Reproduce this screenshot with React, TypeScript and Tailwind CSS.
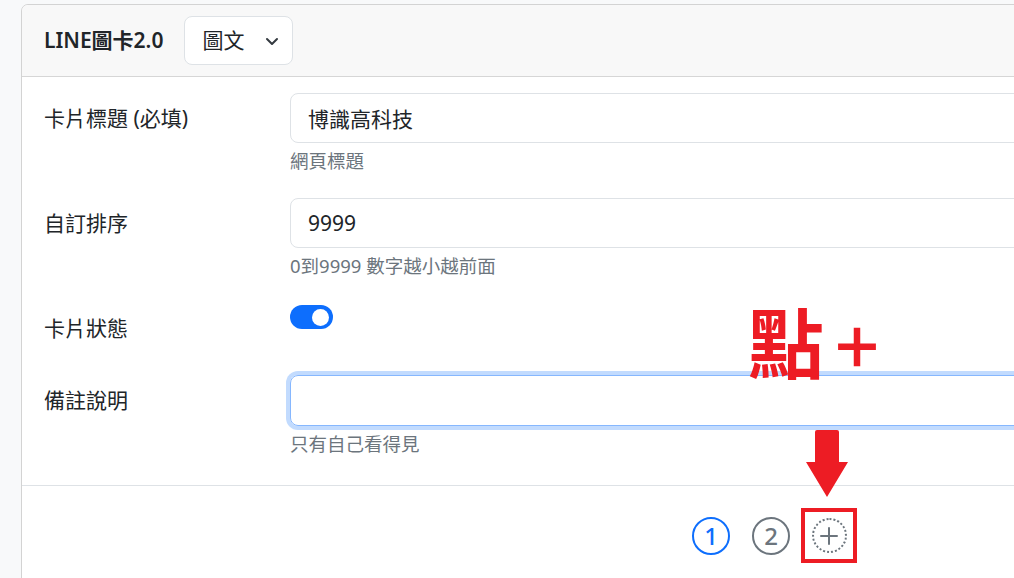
import React from 'react';

const font = "font-['Noto_Sans','Noto_Sans_CJK_TC',sans-serif]";

const Field: React.FC<{ label: string; children: React.ReactNode; tight?: boolean }> = ({ label, children, tight }) => (
  <div className="flex items-start mb-[24px]">
    <label className={`w-[246px] shrink-0 pt-[10px] ${tight ? 'pb-[8px]' : 'pb-[10px]'} text-[21px] leading-[30px] text-[#212529]`}>{label}</label>
    <div className="flex-1">{children}</div>
  </div>
);

const Help: React.FC<{ text: string }> = ({ text }) => (
  <p className="mt-[5px] text-[18.5px] leading-[26px] text-[#6c757d]">{text}</p>
);

export default function App() {
  return (
    <div className={`relative w-[1014px] h-[578px] overflow-hidden bg-[#f8f9fa] pl-[21px] pt-[4px] ${font}`}>
      <div className="w-[1100px] h-[700px] bg-white border border-[#d3d3d3] rounded-tl-[7px]">
        {/* header */}
        <div className="h-[72px] bg-[#f8f8f8] border-b border-[#d6d6d6] rounded-tl-[7px] flex items-center pl-[22px] gap-[21px]">
          <h2 className="text-[21px] font-semibold text-[#212529]">LINE圖卡2.0</h2>
          <button className="h-[49px] w-[109px] bg-white border border-[#dee2e6] rounded-[8px] flex items-center pl-[17px] gap-[20px] text-[21px] text-[#212529]">
            圖文
            <svg width="16" height="16" viewBox="0 0 16 16" fill="none" stroke="#343a40" strokeWidth="2" strokeLinecap="round" strokeLinejoin="round">
              <path d="M3 6l5 5 5-5" />
            </svg>
          </button>
        </div>

        {/* body */}
        <div className="pl-[22px] pt-[16px] pb-[4px] border-b border-[#dee2e6]">
          <Field label="卡片標題 (必填)">
            <input
              readOnly
              value="博識高科技"
              className="w-full h-[50px] border border-[#dee2e6] rounded-[8px] px-[17px] text-[21px] text-[#212529] outline-none"
            />
            <Help text="網頁標題" />
          </Field>
          <Field label="自訂排序">
            <input
              readOnly
              value="9999"
              className="w-full h-[50px] border border-[#dee2e6] rounded-[8px] px-[17px] text-[21px] text-[#212529] outline-none"
            />
            <Help text="0到9999 數字越小越前面" />
          </Field>
          <Field label="卡片狀態" tight>
            <div className="mt-[2px] w-[43px] h-[24px] rounded-full bg-[#0d6efd] flex items-center justify-end pr-[4px]">
              <span className="w-[17px] h-[17px] rounded-full bg-white" />
            </div>
          </Field>
          <Field label="備註說明">
            <div className="h-[51px] w-full border border-[#86b7fe] rounded-[8px] ring-4 ring-[#c2dbfe]" />
            <Help text="只有自己看得見" />
          </Field>
        </div>

        {/* footer */}
        <div className="flex items-center pl-[670px] pt-[22px]">
          <span className="w-[38px] h-[38px] rounded-full border-[2.5px] border-[#0d6efd] flex items-center justify-center text-[24px] font-medium text-[#0d6efd] leading-none">1</span>
          <span className="ml-[22px] w-[38px] h-[38px] rounded-full border-[2.5px] border-[#6c757d] flex items-center justify-center text-[24px] font-medium text-[#6c757d] leading-none">2</span>
          <div className="ml-[11px] w-[56px] h-[55px] border-[4px] border-[#ed1c24] flex items-center justify-center">
            <span className="w-[35px] h-[35px] rounded-full border-2 border-dotted border-[#6c757d] flex items-center justify-center">
              <svg width="20" height="20" viewBox="0 0 20 20" stroke="#6c757d" strokeWidth="2" strokeLinecap="round">
                <path d="M10 2v16M2 10h16" />
              </svg>
            </span>
          </div>
        </div>
      </div>

      {/* annotation */}
      <div className="absolute left-[748px] top-[302px] flex items-center text-[#ed1c24] leading-none font-['Noto_Sans_CJK_TC',sans-serif]">
        <span className="text-[76px] font-bold">點</span>
        <span className="ml-[6px] mt-[10px] text-[54px] font-black">＋</span>
      </div>
      <svg className="absolute left-[805px] top-[430px]" width="44" height="68" viewBox="0 0 44 68">
        <path d="M10 2 Q10 0 12 0 H32 Q34 0 34 2 V32 H43 L22 67 L1 32 H10 Z" fill="#ed1c24" />
      </svg>
    </div>
  );
}
